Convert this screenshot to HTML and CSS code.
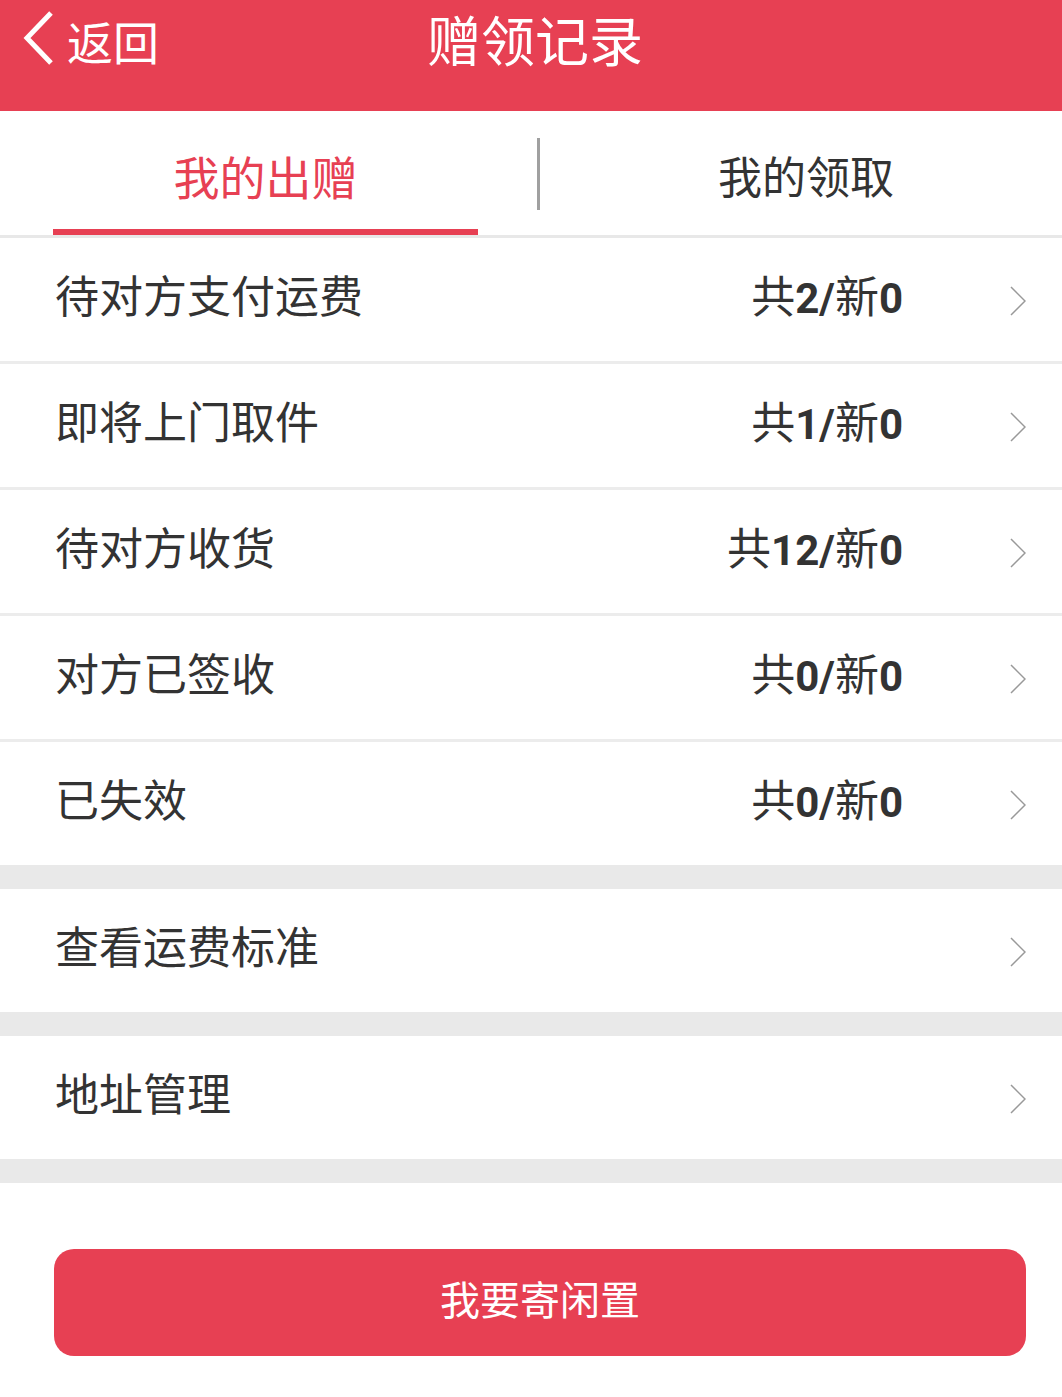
FILE: index.html
```html
<!DOCTYPE html>
<html lang="zh-CN">
<head>
    <meta charset="UTF-8">
    <meta name="viewport" content="width=device-width, initial-scale=1.0">
    <title>赠领记录</title>
    <link rel="stylesheet" href="styles.css">
</head>
<body>
    <header class="topbar">
        <a class="back" href="#">
            <svg class="back-icon" width="32" height="56" viewBox="0 0 32 56">
                <polyline points="29,3 5,28 29,53" fill="none" stroke="#fff" stroke-width="5"/>
            </svg>
            <span>返回</span>
        </a>
        <h1 class="title">赠领记录</h1>
        <div class="spacer"></div>
    </header>

    <nav class="tabs">
        <div class="tab active">
            <span class="tab-label">我的出赠</span>
            <span class="tab-bar"></span>
        </div>
        <div class="tab-divider"></div>
        <div class="tab">
            <span class="tab-label">我的领取</span>
        </div>
    </nav>

    <section class="group">
        <div class="row">
            <span class="row-label">待对方支付运费</span>
            <span class="count">共<b>2/</b>新<b>0</b></span>
            <svg class="arrow" width="16" height="30" viewBox="0 0 16 30"><polyline points="1,1 15,15 1,29" fill="none" stroke="#999" stroke-width="1.5"/></svg>
        </div>
        <div class="row">
            <span class="row-label">即将上门取件</span>
            <span class="count">共<b>1/</b>新<b>0</b></span>
            <svg class="arrow" width="16" height="30" viewBox="0 0 16 30"><polyline points="1,1 15,15 1,29" fill="none" stroke="#999" stroke-width="1.5"/></svg>
        </div>
        <div class="row">
            <span class="row-label">待对方收货</span>
            <span class="count">共<b>12/</b>新<b>0</b></span>
            <svg class="arrow" width="16" height="30" viewBox="0 0 16 30"><polyline points="1,1 15,15 1,29" fill="none" stroke="#999" stroke-width="1.5"/></svg>
        </div>
        <div class="row">
            <span class="row-label">对方已签收</span>
            <span class="count">共<b>0/</b>新<b>0</b></span>
            <svg class="arrow" width="16" height="30" viewBox="0 0 16 30"><polyline points="1,1 15,15 1,29" fill="none" stroke="#999" stroke-width="1.5"/></svg>
        </div>
        <div class="row">
            <span class="row-label">已失效</span>
            <span class="count">共<b>0/</b>新<b>0</b></span>
            <svg class="arrow" width="16" height="30" viewBox="0 0 16 30"><polyline points="1,1 15,15 1,29" fill="none" stroke="#999" stroke-width="1.5"/></svg>
        </div>
    </section>

    <section class="group">
        <div class="row">
            <span class="row-label">查看运费标准</span>
            <svg class="arrow" width="16" height="30" viewBox="0 0 16 30"><polyline points="1,1 15,15 1,29" fill="none" stroke="#999" stroke-width="1.5"/></svg>
        </div>
    </section>

    <section class="group">
        <div class="row">
            <span class="row-label">地址管理</span>
            <svg class="arrow" width="16" height="30" viewBox="0 0 16 30"><polyline points="1,1 15,15 1,29" fill="none" stroke="#999" stroke-width="1.5"/></svg>
        </div>
    </section>

    <div class="footer">
        <button class="send-btn" type="button">我要寄闲置</button>
    </div>
</body>
</html>
```

FILE: styles.css
```css
body {
    margin: 0;
    font-family: "Noto Sans CJK SC", "Noto Sans", sans-serif;
    background: #e9e9e9;
    color: #333;
}
.topbar {
    display: grid;
    grid-template-columns: 1fr auto 1fr;
    height: 111px;
    background: #e74053;
    color: #fff;
}
.back {
    display: flex;
    align-items: flex-start;
    padding: 10px 0 0 22px;
    color: #fff;
    text-decoration: none;
}
.back span {
    font-size: 46px;
    line-height: 60px;
    margin-left: 13px;
}
.title {
    margin: 0 0 0 8px;
    font-size: 54px;
    font-weight: normal;
    line-height: 78px;
}
.tabs {
    display: flex;
    height: 124px;
    background: #fff;
    border-bottom: 3px solid #e8e8e8;
}
.tab {
    flex: 1;
    display: flex;
    flex-direction: column;
    align-items: center;
    padding-left: 10px;
}
.tab.active {
    flex: 0 0 531px;
    padding-left: 0;
}
.tab-label {
    margin-top: 34px;
    font-size: 44px;
    line-height: 60px;
    color: #333;
}
.tab.active .tab-label {
    font-size: 46px;
    color: #e74053;
}
.tab-bar {
    margin-top: auto;
    width: 80%;
    height: 6px;
    background: #e74053;
}
.tab-divider {
    width: 3px;
    height: 72px;
    margin: 27px 0 0 6px;
    background: #a0a0a0;
}
.group {
    background: #fff;
    margin-bottom: 24px;
}
.row {
    display: flex;
    align-items: center;
    height: 111px;
    padding: 0 36px 12px 55px;
    border-bottom: 3px solid #ececec;
}
.row:last-child {
    border-bottom: none;
}
.row-label {
    flex: 1;
    font-size: 44px;
}
.count {
    font-size: 44px;
}
.count b {
    font-family: Roboto, sans-serif;
    font-size: 42px;
}
.arrow {
    margin-left: 107px;
    margin-top: 14px;
}
.footer {
    background: #fff;
    padding: 66px 36px 41px 54px;
}
.send-btn {
    display: block;
    width: 100%;
    height: 107px;
    padding-bottom: 10px;
    border: none;
    border-radius: 20px;
    background: #e74053;
    color: #fff;
    font-family: "Noto Sans CJK SC", sans-serif;
    font-size: 40px;
}
```
